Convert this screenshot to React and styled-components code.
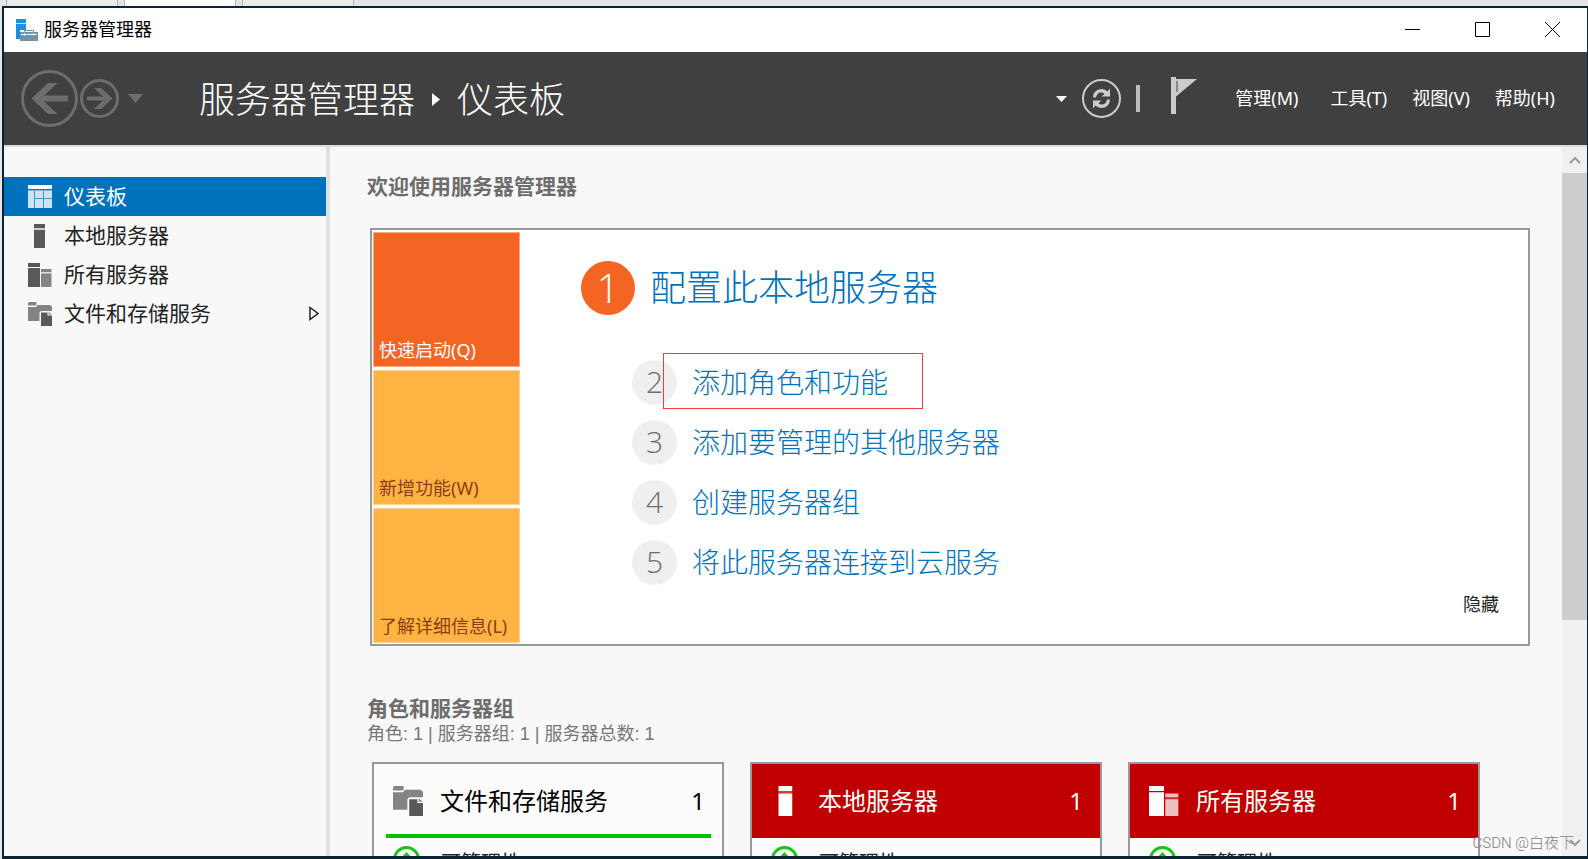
import React from 'react';
import styled, { createGlobalStyle } from 'styled-components';

const GlobalStyle = createGlobalStyle`
  *, *::before, *::after {
    box-sizing: border-box;
  }
  body {
    margin: 0;
    font-family: "Noto Sans", "Noto Sans CJK SC", sans-serif;
    font-size: 18px;
    line-height: 24px;
    color: #222;
    background-color: #e3e5e6;
  }
  h1, h2, h3, p, ul, ol {
    margin: 0;
    padding: 0;
  }
  ul, ol {
    list-style: none;
  }
  a {
    text-decoration: none;
    color: inherit;
  }
  button {
    margin: 0;
    padding: 0;
    border: 0;
    background: none;
    color: inherit;
    font: inherit;
    cursor: pointer;
  }
  svg {
    display: block;
    flex: none;
  }
`;

const Desktop = styled.div`
  position: relative;
  height: 100vh;
  display: flex;
  flex-direction: column;
  overflow: hidden;
`;

const TabStrip = styled.div`
  flex: none;
  display: flex;
  height: 6px;
  padding-left: 6px;
`;

const StripTab = styled.div`
  width: 112px;
  margin-right: 6px;
  border: solid #b0b3b5;
  border-width: 0 1px;
  background-color: ${props => (props.$active ? '#fff' : '#eaecec')};
`;

const Window = styled.div`
  flex: 1;
  min-height: 0;
  display: flex;
  flex-direction: column;
  margin-left: 2px;
  border: solid #0b2435;
  border-width: 2px 1px 3px 2px;
  background-color: #f8f8f8;
`;

const TitleBar = styled.header`
  flex: none;
  display: flex;
  justify-content: space-between;
  height: 44px;
  padding-bottom: 1px;
  background-color: #fff;
  color: #000;
`;

const AppName = styled.div`
  display: flex;
  align-items: center;
  gap: 6px;
  padding-left: 12px;
  span {
    padding-bottom: 1px;
  }
`;

const WindowButtons = styled.div`
  display: flex;
  button {
    width: 70px;
    display: flex;
    align-items: center;
    justify-content: center;
    &:hover {
      background-color: #e5e5e5;
    }
  }
`;

const Header = styled.div`
  flex: none;
  display: flex;
  align-items: center;
  height: 95px;
  padding: 0 32px 0 17px;
  border-bottom: 2px solid #dcdcdc;
  background-color: #404040;
  color: #fff;
`;

const History = styled.div`
  display: flex;
  align-items: center;
  gap: 2px;
  width: 178px;
  button:last-child {
    margin-left: 7px;
  }
`;

const Crumbs = styled.h1`
  flex: 1;
  display: flex;
  align-items: center;
  gap: 17px;
  padding-top: 2px;
  font-size: 36px;
  line-height: 48px;
  font-weight: 300;
`;

const Tools = styled.div`
  display: flex;
  align-items: center;
  gap: 15px;
`;

const Divider = styled.div`
  width: 4px;
  height: 27px;
  background-color: #bdbdbd;
`;

const FlagButton = styled.button`
  padding: 0 38px 6px 16px;
`;

const Menu = styled.nav`
  display: flex;
  gap: 25px;
  padding-bottom: 2px;
`;

const MenuButton = styled.button`
  margin-right: ${props => (props.$wide ? '7px' : '0')};
  white-space: nowrap;
`;

const Body = styled.div`
  flex: 1;
  min-height: 0;
  display: flex;
`;

const Sidebar = styled.nav`
  flex: none;
  width: 326px;
  padding-top: 30px;
  border-right: 4px solid #e0e0e0;
`;

const NavItem = styled.a`
  display: flex;
  align-items: center;
  gap: 12px;
  height: 39px;
  padding: 0 7px 0 24px;
  font-size: 21px;
  background-color: ${props => (props.$active ? '#0072bc' : 'transparent')};
  color: ${props => (props.$active ? '#fff' : '#222')};
  span {
    flex: 1;
    padding-bottom: 2px;
  }
`;

const Content = styled.main`
  flex: 1;
  min-width: 0;
  overflow: hidden;
  padding: 25px 32px 0 37px;
`;

const SectionTitle = styled.h2`
  font-size: 21px;
  line-height: 28px;
  font-weight: 700;
  color: #6d6d6d;
`;

const Welcome = styled.section`
  display: flex;
  height: 418px;
  margin: 28px 0 48px 3px;
  padding: 2px 1px 1px;
  border: 2px solid #999;
  background-color: #fff;
`;

const Tiles = styled.div`
  flex: none;
  width: 147px;
  display: flex;
  flex-direction: column;
  gap: 3px;
`;

const Tile = styled.button`
  flex: 1;
  display: flex;
  align-items: flex-end;
  padding: 0 5px 4px;
  border: 1px solid ${props => (props.$active ? '#f9a885' : '#ffd190')};
  background-color: ${props => (props.$active ? '#f46523' : '#ffb343')};
  color: ${props => (props.$active ? '#fff' : '#8a3e12')};
  white-space: nowrap;
`;

const Steps = styled.ol`
  flex: 1;
  padding: 29px 0 0 61px;
`;

const Step = styled.li`
  display: flex;
  align-items: center;
  gap: 15px;
  height: ${props => (props.$main ? '54px' : '60px')};
  margin: ${props => (props.$main ? '0 0 37px' : '0 0 0 51px')};
  font-size: ${props => (props.$main ? '36px' : '28px')};
  line-height: 48px;
  font-weight: 300;
  a {
    color: #0072bc;
    &:hover {
      color: #3399ff;
    }
  }
`;

const StepNumber = styled.span`
  width: ${props => (props.$main ? '54px' : '45px')};
  height: ${props => (props.$main ? '54px' : '45px')};
  display: flex;
  align-items: center;
  justify-content: center;
  border-radius: 50%;
  background-color: ${props => (props.$main ? '#f46523' : '#efefef')};
  color: ${props => (props.$main ? '#fff' : '#6d6d6d')};
  font-family: "Open Sans", "Noto Sans", sans-serif;
  font-size: ${props => (props.$main ? '40px' : '30px')};
`;

const Marked = styled.span`
  position: relative;
  &::after {
    content: '';
    position: absolute;
    top: -10px;
    left: -29px;
    right: -35px;
    height: 56px;
    border: 1px solid #f53b3b;
    pointer-events: none;
  }
`;

const HideButton = styled.button`
  align-self: flex-end;
  margin: 0 28px 27px 0;
`;

const Summary = styled.p`
  font-family: "Liberation Sans", "Noto Sans CJK SC", sans-serif;
  line-height: 24px;
  color: #777;
`;

const Cards = styled.div`
  display: flex;
  gap: 26px;
  margin: 16px 0 0 5px;
`;

const Card = styled.section`
  flex: 0 1 352px;
  border: 2px solid #999;
  background-color: #fcfcfc;
`;

const CardHead = styled.div`
  display: flex;
  align-items: center;
  gap: 17px;
  height: 74px;
  padding: 0 17px 0 19px;
  background-color: ${props => (props.$alert ? '#c00000' : 'transparent')};
  color: ${props => (props.$alert ? '#fff' : '#000')};
  font-size: 24px;
  line-height: 32px;
  position: relative;
  h3 {
    flex: 1;
    font-size: 24px;
    font-weight: 400;
  }
  &::after {
    content: '';
    position: absolute;
    left: 12px;
    right: 11px;
    bottom: 0;
    height: 4px;
    background-color: ${props => (props.$alert ? 'transparent' : '#00c000')};
  }
`;

const CardRow = styled.div`
  display: flex;
  align-items: flex-start;
  gap: 21px;
  padding: 8px 19px;
  font-size: 20px;
  line-height: 28px;
  span {
    padding-top: 3px;
  }
`;

const ScrollBar = styled.div`
  flex: none;
  width: 25px;
  display: flex;
  flex-direction: column;
  background-color: #f0f0f0;
  button {
    height: 26px;
    display: flex;
    align-items: center;
    justify-content: center;
  }
`;

const Track = styled.div`
  flex: 1;
  &::before {
    content: '';
    display: block;
    height: 68%;
    background-color: #cdcdcd;
  }
`;

const Watermark = styled.div`
  position: absolute;
  right: 14px;
  bottom: 4px;
  font-family: Roboto, "Noto Sans CJK SC", sans-serif;
  font-size: 15px;
  font-weight: 300;
  color: #808080;
`;

const AppIcon = () => (
  <svg width="22" height="22" viewBox="0 0 22 22">
    <path d="M0 0h10v4H0zM0 5h10v6H4v9H0z" fill="#1f8fdf" />
    <path d="M0 4h10v1H0z" fill="#bcdff7" />
    <path d="M8.500 14v-2.500h9V14" fill="none" stroke="#7393a7" />
    <path d="M4 13h18v9H4z" fill="#7393a7" />
    <path d="M5 15.500h16M8.500 14v3M17.500 14v3" fill="none" stroke="#fff" />
  </svg>
);

const DashboardIcon = () => (
  <svg width="24" height="24" viewBox="0 0 24 24">
    <path d="M0 0h24v4H0z" fill="#fff" />
    <path d="M0 5h24v1H0z" fill="#7db8de" />
    <path d="M0 6h6v17H0zM7 6h8v7H7zM16 6h8v7h-8zM7 14h8v9H7zM16 14h8v9h-8z" fill="#cce3f2" />
    <path d="M6 6h1v17H6zM15 6h1v17h-1zM7 13h17v1H7z" fill="#3f95cd" />
  </svg>
);

const ServerIcon = ({ size = 24, color = '#595959' }) => (
  <svg width={size} height={size} viewBox="0 0 24 24">
    <path d="M6 0h11v4H6zM6 6h11v18H6z" fill={color} />
    <path d="M6 4h11v2H6z" fill={color} opacity="0.25" />
  </svg>
);

const ServersIcon = ({ size = 24, color = '#595959', back = '#848484' }) => (
  <svg width={size} height={size} viewBox="0 0 24 24">
    <path d="M0 0h12v4H0zM0 5h12v19H0z" fill={color} />
    <path d="M13 6h10.500v3H13zM13 10.500h10.500V24H13z" fill={back} />
    <path d="M13 9h10.500v1.500H13z" fill={back} opacity="0.25" />
  </svg>
);

const FilesIcon = ({ size = 24 }) => (
  <svg width={size} height={size} viewBox="0 0 24 24">
    <path d="M1 0h7.500v2.500l-1 1H0V1z" fill="#848484" />
    <path d="M0 5h8l1.500-2H22l2 1.500V9h-11l-1.500 1.500V19H0z" fill="#848484" />
    <path d="M13 10.500h6.500v3H24V24H13z" fill="#595959" />
    <path d="M20.500 10l3.500 2.500h-3.500z" fill="#848484" />
  </svg>
);

const BackIcon = () => (
  <svg width="57" height="57" viewBox="0 0 57 57" fill="none" stroke="#6d6d6d">
    <circle cx="28.500" cy="28.500" r="27" strokeWidth="3" />
    <path d="M14 28.500h33" strokeWidth="6" />
    <path d="M27 13h9.500L20 28.500 36.500 44H27L10.500 28.500z" fill="#6d6d6d" stroke="none" />
  </svg>
);

const ForwardIcon = () => (
  <svg width="39" height="39" viewBox="0 0 39 39" fill="none" stroke="#6d6d6d">
    <circle cx="19.500" cy="19.500" r="18" strokeWidth="3" />
    <path d="M7 19.500h22" strokeWidth="4" />
    <path d="M14 9h7l11.500 10.500L21 30h-7l11-10.500z" fill="#6d6d6d" stroke="none" />
  </svg>
);

const Caret = ({ width, height, color }) => (
  <svg width={width} height={height} viewBox="0 0 10 6" preserveAspectRatio="none">
    <path d="M0 0h10L5 6z" fill={color} />
  </svg>
);

const RefreshIcon = () => (
  <svg width="39" height="39" viewBox="0 0 39 39">
    <circle cx="19.500" cy="19.500" r="18.500" fill="none" stroke="#ccc" strokeWidth="2" />
    <g fill="#ccc">
      <path d="M11 18.500c0-5 4-8.500 8.500-8.500 2.500 0 4.500 1 6 2.500L28 9.500v8h-8.500l3-2.500c-1-1-2-1.500-3.500-1.500-2.500 0-4.500 2-5 5z" />
      <path d="M28 20.500c0 5-4 8.500-8.500 8.500-2.500 0-4.500-1-6-2.500L11 29.500v-8h8.500l-3 2.500c1 1 2 1.500 3.500 1.500 2.500 0 4.500-2 5-5z" />
    </g>
  </svg>
);

const FlagIcon = () => (
  <svg width="26" height="37" viewBox="0 0 26 37">
    <path d="M0 0h5v37H0z" fill="#ccc" />
    <path d="M5 2h21L5 19.500z" fill="#ccc" />
    <path d="M6 4v11" stroke="#404040" fill="none" />
  </svg>
);

const OkIcon = () => (
  <svg width="27" height="27" viewBox="0 0 27 27" fill="none" stroke="#16c416">
    <circle cx="13.500" cy="13.500" r="12" strokeWidth="3" />
    <path d="M13.500 6l6 6.500h-4V21h-4v-8.500h-4z" fill="#16c416" stroke="none" />
  </svg>
);

const Chevron = ({ d }) => (
  <svg width="12" height="8" viewBox="0 0 12 8">
    <path d={d} fill="none" stroke="#9a9a9a" strokeWidth="2" />
  </svg>
);

const navItems = [
  { text: '仪表板', icon: <DashboardIcon />, active: true },
  { text: '本地服务器', icon: <ServerIcon /> },
  { text: '所有服务器', icon: <ServersIcon /> },
  { text: '文件和存储服务', icon: <FilesIcon />, expandable: true },
];

const steps = [
  { text: '配置此本地服务器', main: true },
  { text: '添加角色和功能', marked: true },
  { text: '添加要管理的其他服务器' },
  { text: '创建服务器组' },
  { text: '将此服务器连接到云服务' },
];

const cards = [
  { text: '文件和存储服务', icon: <FilesIcon size={30} /> },
  { text: '本地服务器', icon: <ServerIcon size={30} color="#fff" />, alert: true },
  { text: '所有服务器', icon: <ServersIcon size={30} color="#fff" back="#efbfbf" />, alert: true },
];

function App() {
  return (
    <Desktop>
      <GlobalStyle />
      <TabStrip>
        <StripTab />
        <StripTab $active />
        <StripTab />
      </TabStrip>
      <Window>
        <TitleBar>
          <AppName>
            <AppIcon />
            <span>服务器管理器</span>
          </AppName>
          <WindowButtons>
            <button aria-label="最小化">
              <svg width="15" height="15" viewBox="0 0 15 15"><path d="M0 7.500h15" stroke="#000" /></svg>
            </button>
            <button aria-label="最大化">
              <svg width="15" height="15" viewBox="0 0 15 15"><path d="M.5.500h14v14H.5z" stroke="#000" fill="none" /></svg>
            </button>
            <button aria-label="关闭">
              <svg width="15" height="15" viewBox="0 0 15 15"><path d="M0 0l15 15M15 0L0 15" stroke="#000" /></svg>
            </button>
          </WindowButtons>
        </TitleBar>
        <Header>
          <History>
            <button aria-label="后退"><BackIcon /></button>
            <button aria-label="前进"><ForwardIcon /></button>
            <button aria-label="历史记录"><Caret width={15} height={9} color="#6d6d6d" /></button>
          </History>
          <Crumbs>
            服务器管理器
            <svg width="8" height="13" viewBox="0 0 8 13"><path d="M0 0l8 6.500L0 13z" fill="#fff" /></svg>
            仪表板
          </Crumbs>
          <Tools>
            <button aria-label="更多"><Caret width={11} height={6} color="#fff" /></button>
            <button aria-label="刷新"><RefreshIcon /></button>
            <Divider />
            <FlagButton aria-label="通知"><FlagIcon /></FlagButton>
          </Tools>
          <Menu>
            <MenuButton $wide>管理(M)</MenuButton>
            <MenuButton>工具(T)</MenuButton>
            <MenuButton>视图(V)</MenuButton>
            <MenuButton>帮助(H)</MenuButton>
          </Menu>
        </Header>
        <Body>
          <Sidebar>
            {navItems.map(item => (
              <NavItem key={item.text} href="#" $active={item.active}>
                {item.icon}
                <span>{item.text}</span>
                {item.expandable && (
                  <svg width="10" height="15" viewBox="0 0 10 15">
                    <path d="M1 1.500l8 6-8 6z" fill="none" stroke="#222" strokeWidth="1.500" />
                  </svg>
                )}
              </NavItem>
            ))}
          </Sidebar>
          <Content>
            <SectionTitle>欢迎使用服务器管理器</SectionTitle>
            <Welcome>
              <Tiles>
                <Tile $active>快速启动(Q)</Tile>
                <Tile>新增功能(W)</Tile>
                <Tile>了解详细信息(L)</Tile>
              </Tiles>
              <Steps>
                {steps.map((step, i) => (
                  <Step key={step.text} $main={step.main}>
                    <StepNumber $main={step.main}>{i + 1}</StepNumber>
                    <a href="#">{step.marked ? <Marked>{step.text}</Marked> : step.text}</a>
                  </Step>
                ))}
              </Steps>
              <HideButton>隐藏</HideButton>
            </Welcome>
            <SectionTitle>角色和服务器组</SectionTitle>
            <Summary>角色: 1 | 服务器组: 1 | 服务器总数: 1</Summary>
            <Cards>
              {cards.map(card => (
                <Card key={card.text}>
                  <CardHead $alert={card.alert}>
                    {card.icon}
                    <h3>{card.text}</h3>
                    <span>1</span>
                  </CardHead>
                  <CardRow>
                    <OkIcon />
                    <span>可管理性</span>
                  </CardRow>
                </Card>
              ))}
            </Cards>
          </Content>
          <ScrollBar>
            <button aria-label="向上滚动"><Chevron d="M1 7l5-5 5 5" /></button>
            <Track />
            <button aria-label="向下滚动"><Chevron d="M1 1l5 5 5-5" /></button>
          </ScrollBar>
        </Body>
      </Window>
      <Watermark>CSDN @白夜下</Watermark>
    </Desktop>
  );
}

export default App;
